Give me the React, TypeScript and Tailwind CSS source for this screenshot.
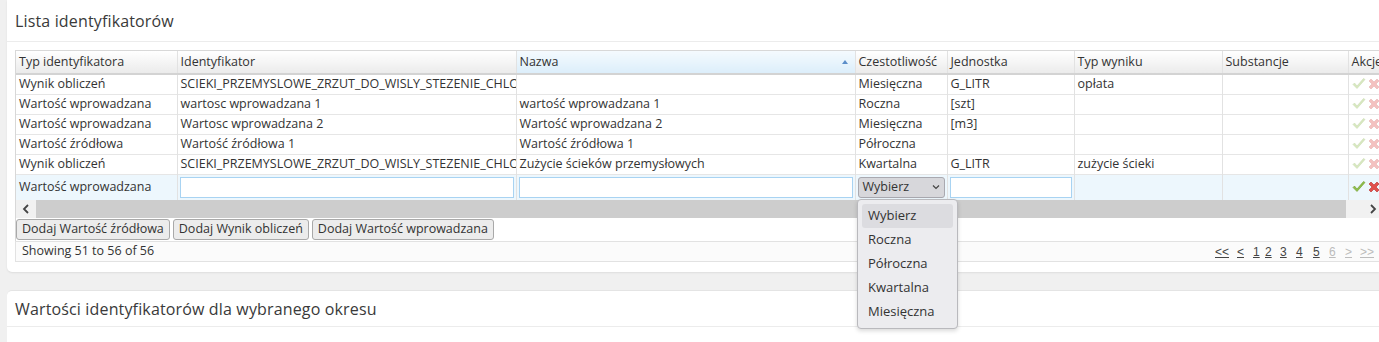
import React from 'react';

const cols = [161, 339, 339, 92, 127, 148, 126, 70];
const headers = ['Typ identyfikatora', 'Identyfikator', 'Nazwa', 'Czestotliwość', 'Jednostka', 'Typ wyniku', 'Substancje', 'Akcje'];

const rows = [
  ['Wynik obliczeń', 'SCIEKI_PRZEMYSLOWE_ZRZUT_DO_WISLY_STEZENIE_CHLORKOW', '', 'Miesięczna', 'G_LITR', 'opłata', ''],
  ['Wartość wprowadzana', 'wartosc wprowadzana 1', 'wartość wprowadzana 1', 'Roczna', '[szt]', '', ''],
  ['Wartość wprowadzana', 'Wartosc wprowadzana 2', 'Wartość wprowadzana 2', 'Miesięczna', '[m3]', '', ''],
  ['Wartość źródłowa', 'Wartość źródłowa 1', 'Wartość źródłowa 1', 'Półroczna', '', '', ''],
  ['Wynik obliczeń', 'SCIEKI_PRZEMYSLOWE_ZRZUT_DO_WISLY_STEZENIE_CHLORKOW', 'Zużycie ścieków przemysłowych', 'Kwartalna', 'G_LITR', 'zużycie ścieki', ''],
];

// pager items: label, width, disabled
const pager: [string, number, boolean][] = [
  ['<<', 22, false],
  ['<', 16, false],
  ['1', 12, false],
  ['2', 15, false],
  ['3', 16, false],
  ['4', 17, false],
  ['5', 16, false],
  ['6', 16, true],
  ['>', 15, true],
  ['>>', 19, true],
];

function Check({ faded }: { faded?: boolean }) {
  return (
    <svg width="14" height="12" viewBox="0 0 14 12" className={faded ? 'opacity-35' : ''}>
      <path d="M1 6.5 L5 10.5 L13 1.5 L11.5 0.5 L5 8 L2.5 5 Z" fill="#8fc04a" stroke="#6e9a2e" strokeWidth="0.6" />
    </svg>
  );
}

function Cross({ faded }: { faded?: boolean }) {
  return (
    <svg width="12" height="12" viewBox="0 0 12 12" className={faded ? 'opacity-35' : ''}>
      <path d="M1 3 L3 1 L6 4 L9 1 L11 3 L8 6 L11 9 L9 11 L6 8 L3 11 L1 9 L4 6 Z" fill="#e2504c" stroke="#b52d2a" strokeWidth="0.6" />
    </svg>
  );
}

export default function App() {
  const font = { fontFamily: '"Open Sans", "Noto Sans", sans-serif' };
  return (
    <div className="relative w-[1379px] h-[342px] overflow-hidden bg-[#f0f0f0] pl-[7px] text-[#333]" style={font}>
      <div className="h-[272px] bg-white rounded-bl-[5px] shadow-[0_1px_2px_rgba(0,0,0,0.08)] flex flex-col">
        <div className="h-[42px] shrink-0 flex items-center px-[8px] border-b border-[#ececec] text-[16px] tracking-[0.15px] text-[#3a3a3a]">
          Lista identyfikatorów
        </div>
        <div className="pt-[8px] pl-[8px]">
          <div className="overflow-hidden border-l border-t border-[#d8d8d8]">
            <table className="table-fixed border-collapse text-[12.5px] leading-none" style={{ width: cols.reduce((a, b) => a + b, 0) }}>
              <colgroup>
                {cols.map((w, i) => (
                  <col key={i} style={{ width: w }} />
                ))}
              </colgroup>
              <thead>
                <tr className="h-[23px]">
                  {headers.map((h, i) => (
                    <th
                      key={h}
                      className={`relative text-left font-normal px-[3px] border-r border-b-2 border-r-[#e2e2e2] border-b-[#d3d3d3] whitespace-nowrap overflow-hidden ${
                        i === 2 ? 'bg-gradient-to-b from-[#f4fafe] to-[#dceefa]' : 'bg-gradient-to-b from-[#ffffff] to-[#ebebeb]'
                      }`}
                    >
                      {h}
                      {i === 2 && (
                        <span className="absolute right-[7px] top-[9px] w-0 h-0 border-l-[3px] border-r-[3px] border-b-[4px] border-l-transparent border-r-transparent border-b-[#5b8ec9]" />
                      )}
                    </th>
                  ))}
                </tr>
              </thead>
              <tbody>
                {rows.map((r, ri) => (
                  <tr key={ri} className="h-[20px] border-b border-[#e6e6e6]">
                    {r.map((c, ci) => (
                      <td key={ci} className="px-[3px] border-r border-[#e2e2e2] whitespace-nowrap overflow-hidden">
                        {c}
                      </td>
                    ))}
                    <td className="px-[3px]">
                      <div className="flex items-center gap-[2px]">
                        <Check faded />
                        <Cross faded />
                      </div>
                    </td>
                  </tr>
                ))}
                <tr className="h-[26px] bg-[#edf7fd]">
                  <td className="px-[3px] border-r border-[#e2e2e2] whitespace-nowrap">Wartość wprowadzana</td>
                  <td className="px-[2px] border-r border-[#e2e2e2]">
                    <div className="h-[21px] bg-white border border-[#a8d3f2]" />
                  </td>
                  <td className="px-[2px] border-r border-[#e2e2e2]">
                    <div className="h-[21px] bg-white border border-[#a8d3f2]" />
                  </td>
                  <td className="px-[2px] border-r border-[#e2e2e2]">
                    <div className="h-[21px] w-[87px] bg-[#d7d7db] border border-[#a9a9b0] rounded-[3px] flex items-center justify-between px-[4px] text-[12.5px]">
                      <span>Wybierz</span>
                      <svg width="8" height="6" viewBox="0 0 8 6">
                        <path d="M1 1.5 L4 4.5 L7 1.5" fill="none" stroke="#444" strokeWidth="1.2" />
                      </svg>
                    </div>
                  </td>
                  <td className="px-[2px] border-r border-[#e2e2e2]">
                    <div className="h-[21px] bg-white border border-[#a8d3f2]" />
                  </td>
                  <td className="border-r border-[#e2e2e2]" />
                  <td className="border-r border-[#e2e2e2]" />
                  <td className="px-[3px]">
                    <div className="flex items-center gap-[2px]">
                      <Check />
                      <Cross />
                    </div>
                  </td>
                </tr>
              </tbody>
            </table>
            <div className="h-[18px] flex items-stretch">
              <div className="w-[20px] bg-[#f1f1f1] flex items-center justify-center">
                <svg width="8" height="10" viewBox="0 0 8 10">
                  <path d="M6 1 L2 5 L6 9" fill="none" stroke="#444" strokeWidth="1.8" />
                </svg>
              </div>
              <div className="w-[1310px] bg-[#cdcdcd]" />
              <div className="flex-1 bg-[#f1f1f1] flex items-center justify-end pr-[2px]">
                <svg width="8" height="10" viewBox="0 0 8 10">
                  <path d="M2 1 L6 5 L2 9" fill="none" stroke="#444" strokeWidth="1.8" />
                </svg>
              </div>
            </div>
          </div>
          <div className="h-[23px] flex items-center gap-[3px] border-l border-[#d8d8d8]">
            {['Dodaj Wartość źródłowa', 'Dodaj Wynik obliczeń', 'Dodaj Wartość wprowadzana'].map((b) => (
              <button
                key={b}
                className="h-[21px] px-[5px] bg-[#ececec] border border-[#a9a9a9] rounded-[3px] text-[12.5px] text-[#333] leading-none"
              >
                {b}
              </button>
            ))}
          </div>
          <div className="h-[21px] flex items-center justify-between bg-[#fbfbfb] border border-r-0 border-[#e2e2e2] pl-[6px] text-[12.5px]">
            <span>Showing 51 to 56 of 56</span>
            <div className="flex items-center text-[12px]" style={{ fontFamily: '"Liberation Sans", sans-serif' }}>
              {pager.map(([l, w, d]) => (
                <span key={l} className={`shrink-0 text-left ${d ? 'text-[#bcbcbc]' : 'text-[#444]'}`} style={{ width: w }}>
                  <span className="underline">{l}</span>
                </span>
              ))}
            </div>
          </div>
        </div>
      </div>
      <div className="mt-[18px] h-[60px] bg-white border-t border-[#e4e4e4] rounded-tl-[5px]">
        <div className="h-[36px] flex items-center px-[8px] border-b border-[#ececec] text-[16px] tracking-[0.15px] text-[#3a3a3a]">
          Wartości identyfikatorów dla wybranego okresu
        </div>
      </div>
      <div
        className="absolute left-[857px] top-[199px] w-[101px] bg-[#ececef] border border-[#b9b9bd] rounded-[4px] shadow-[0_2px_4px_rgba(0,0,0,0.15)] p-[4px] text-[13px] text-[#333]"
        style={{ fontFamily: '"Open Sans", sans-serif' }}
      >
        {['Wybierz', 'Roczna', 'Półroczna', 'Kwartalna', 'Miesięczna'].map((o, i) => (
          <div key={o} className={`h-[24px] flex items-center pl-[6px] rounded-[3px] ${i === 0 ? 'bg-[#dcdce0]' : ''}`}>
            {o}
          </div>
        ))}
      </div>
    </div>
  );
}
